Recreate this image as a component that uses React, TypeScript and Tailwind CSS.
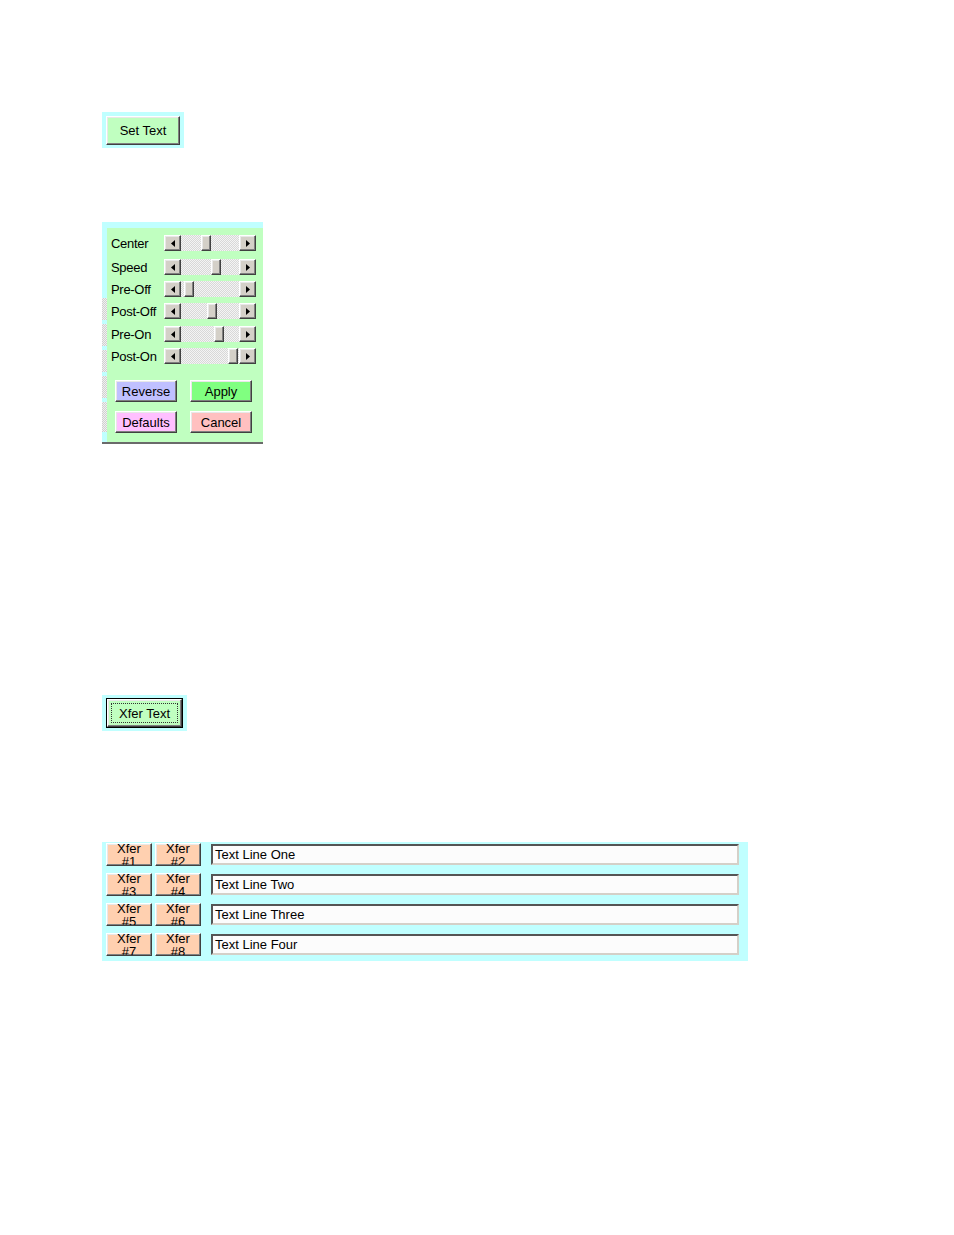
import React from "react";

const font = { fontFamily: '"Liberation Sans", Arial, sans-serif' };

const raised =
  "border border-t-white border-l-white border-r-[#404040] border-b-[#404040] shadow-[inset_-1px_-1px_0_#808080,inset_1px_1px_0_#e8e8e8]";

const sliders = [
  { label: "Center", top: "mt-[7px]", pos: 37 },
  { label: "Speed", top: "mt-[8px]", pos: 47 },
  { label: "Pre-Off", top: "mt-[6px]", pos: 20 },
  { label: "Post-Off", top: "mt-[6px]", pos: 43 },
  { label: "Pre-On", top: "mt-[7px]", pos: 50 },
  { label: "Post-On", top: "mt-[6px]", pos: 64 },
];

function Arrow({ dir }: { dir: "left" | "right" }) {
  return (
    <div className={`flex h-[16px] w-[17px] shrink-0 items-center justify-center bg-[#d4d0c8] ${raised}`}>
      <svg width="4" height="7" viewBox="0 0 4 7">
        {dir === "left" ? <path d="M4 0 L0 3.5 L4 7 Z" fill="#000" /> : <path d="M0 0 L4 3.5 L0 7 Z" fill="#000" />}
      </svg>
    </div>
  );
}

function ScrollBar({ pos }: { pos: number }) {
  return (
    <div className="flex h-[16px] w-[92px]">
      <Arrow dir="left" />
      <div className="relative flex-1 bg-[repeating-conic-gradient(#d8d8d8_0_25%,#f4f4f4_0_50%)] bg-[length:2px_2px]">
        <div className={`absolute top-0 h-[16px] w-[10px] bg-[#d4d0c8] ${raised}`} style={{ left: pos - 17 }} />
      </div>
      <Arrow dir="right" />
    </div>
  );
}

function ColorButton({ label, bg }: { label: string; bg: string }) {
  return (
    <div className={`flex h-[22px] w-[62px] items-center justify-center pt-[1px] text-[13px] text-black ${bg} ${raised}`}>
      {label}
    </div>
  );
}

const lines = ["Text Line One", "Text Line Two", "Text Line Three", "Text Line Four"];

export default function App() {
  return (
    <div className="min-h-[1235px] bg-white pl-[102px] pt-[112px]" style={font}>
      <div className="w-[82px] bg-[#c0ffff] pb-[3px] pl-[4px] pt-[4px]">
        <div className={`flex h-[29px] w-[74px] items-center justify-center bg-[#c0ffc0] text-[13px] text-black ${raised}`}>
          Set Text
        </div>
      </div>

      <div className="mt-[74px] flex w-[161px] flex-col border-b-2 border-[#6a6a6a] bg-[#c0ffff]">
        <div className="h-[6px]" />
        <div className="flex">
          <div className="flex w-[5px] flex-col">
            <div className="h-[70px]" />
            <div className="h-[22px] bg-[repeating-conic-gradient(#d0d0d0_0_25%,#f0f0f0_0_50%)] bg-[length:2px_2px]" />
            <div className="h-[4px]" />
            <div className="h-[22px] bg-[repeating-conic-gradient(#d0d0d0_0_25%,#f0f0f0_0_50%)] bg-[length:2px_2px]" />
            <div className="h-[4px]" />
            <div className="h-[22px] bg-[repeating-conic-gradient(#d0d0d0_0_25%,#f0f0f0_0_50%)] bg-[length:2px_2px]" />
            <div className="h-[4px]" />
            <div className="h-[22px] bg-[repeating-conic-gradient(#d0d0d0_0_25%,#f0f0f0_0_50%)] bg-[length:2px_2px]" />
            <div className="h-[4px]" />
            <div className="h-[30px] bg-[repeating-conic-gradient(#d0d0d0_0_25%,#f0f0f0_0_50%)] bg-[length:2px_2px]" />
          </div>
          <div className="flex flex-1 flex-col bg-[#c0ffc0] pb-[9px] pl-[4px]">
            {sliders.map((s) => (
              <div key={s.label} className={`flex h-[16px] items-center ${s.top}`}>
                <span className="w-[53px] text-[13px] leading-none tracking-[-0.3px] text-black">{s.label}</span>
                <ScrollBar pos={s.pos} />
              </div>
            ))}
            <div className="ml-[4px] mt-[16px] flex gap-[13px]">
              <ColorButton label="Reverse" bg="bg-[#c0c0ff]" />
              <ColorButton label="Apply" bg="bg-[#80ff80]" />
            </div>
            <div className="ml-[4px] mt-[9px] flex gap-[13px]">
              <ColorButton label="Defaults" bg="bg-[#ffc0ff]" />
              <ColorButton label="Cancel" bg="bg-[#ffc0c0]" />
            </div>
          </div>
        </div>
      </div>

      <div className="mt-[251px] w-[85px] bg-[#c0ffff] pb-[3px] pl-[4px] pt-[3px]">
        <div className="h-[30px] w-[77px] border border-black">
          <div className={`flex h-full w-full items-center justify-center bg-[#c0ffc0] p-[3px] ${raised}`}>
            <div className="flex h-full w-full items-center justify-center border border-dotted border-[#333] pt-[1px] text-[13px] text-black">
              Xfer Text
            </div>
          </div>
        </div>
      </div>

      <div className="mt-[111px] flex w-[646px] flex-col gap-[7px] bg-[#c0ffff] pb-[5px] pl-[4px] pr-[9px] pt-[1px]">
        {lines.map((line, i) => (
          <div key={line} className="flex items-center">
            {[i * 2 + 1, i * 2 + 2].map((n) => (
              <div
                key={n}
                className={`mr-[3px] flex h-[23px] w-[46px] flex-col items-center justify-center overflow-hidden bg-[#ffd0b0] text-[13px] leading-[13px] text-black ${raised}`}
              >
                <span>Xfer</span>
                <span>#{n}</span>
              </div>
            ))}
            <div className="ml-[7px] flex h-[21px] flex-1 items-center border-2 border-t-[#555] border-l-[#555] border-b-[#d4d0c8] border-r-[#d4d0c8] bg-[#fcfcfc] pl-[2px] text-[13px] text-black">
              {line}
            </div>
          </div>
        ))}
      </div>
    </div>
  );
}
